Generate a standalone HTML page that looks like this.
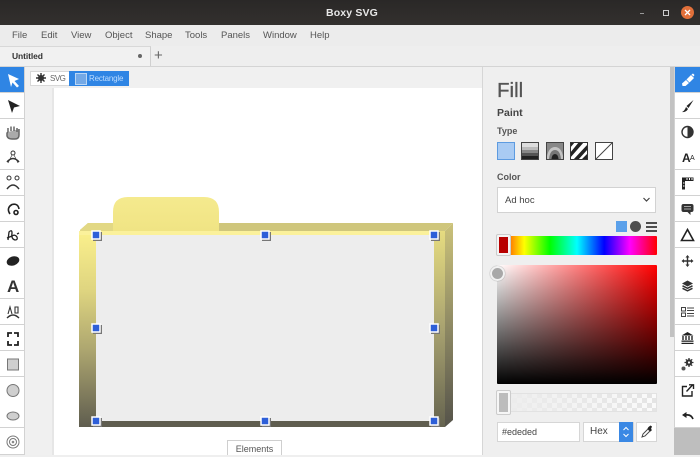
<!DOCTYPE html>
<html><head><meta charset="utf-8">
<style>
html,body{margin:0;padding:0;width:700px;height:455px;overflow:hidden;background:#efefef;font-family:"Liberation Sans",sans-serif;color:#444}
.a{position:absolute}
#title{left:0;top:0;width:700px;height:25px;background:linear-gradient(#2a2827,#33302e)}
#title span{position:absolute;left:326px;top:7px;color:#e8e8e8;font-weight:bold;font-size:10.5px;letter-spacing:.15px}
#menu{left:0;top:25px;width:700px;height:21px;background:#ececec}
#menu span{position:absolute;top:5px;font-size:9.5px;color:#555}
#tabs{left:0;top:46px;width:700px;height:21px;background:#eeeeee;border-bottom:1px solid #d4d4d4;box-sizing:border-box}
.tl{position:absolute;left:0;width:25px;height:26px;box-sizing:border-box;background:#fff;border-bottom:1px solid #d2d2d2;border-right:1px solid #d2d2d2}
.tr{position:absolute;left:674px;width:26px;height:26px;box-sizing:border-box;background:#fff;border-bottom:1px solid #d2d2d2;border-left:1px solid #d2d2d2}
.tl svg,.tr svg{position:absolute;left:0;top:0}
.tr svg{left:-1px}
.lb{position:absolute;font-size:9px;font-weight:bold;color:#555}
</style></head><body>
<div class="a" id="title"><span>Boxy SVG</span>
<div class="a" style="left:640px;top:13px;width:4px;height:1px;background:#999"></div>
<div class="a" style="left:663px;top:10px;width:4px;height:4px;border:1px solid #ccc"></div>
<div class="a" style="left:681px;top:6px;width:13px;height:13px;border-radius:50%;background:#e2703a"></div>
<svg class="a" style="left:681px;top:6px" width="13" height="13"><path d="M4 4L9 9M9 4L4 9" stroke="#fff" stroke-width="1.3"/></svg>
</div>
<div class="a" id="menu">
<span style="left:12px">File</span><span style="left:41px">Edit</span><span style="left:71px">View</span><span style="left:105px">Object</span><span style="left:145px">Shape</span><span style="left:185px">Tools</span><span style="left:221px">Panels</span><span style="left:263px">Window</span><span style="left:310px">Help</span>
</div>
<div class="a" id="tabs">
<div class="a" style="left:0;top:0;width:151px;height:20px;background:#f1f1f1;border-top:1px solid #d8d8d8;border-right:1px solid #d0d0d0;box-sizing:border-box"></div>
<div class="a" style="left:12px;top:5px;font-size:8.5px;font-weight:bold;color:#333;letter-spacing:-.1px">Untitled</div>
<div class="a" style="left:138px;top:8px;width:4px;height:4px;border-radius:50%;background:#666"></div>
<div class="a" style="left:154px;top:1px;font-size:15px;color:#666">+</div>
</div>
<!-- canvas -->
<div class="a" style="left:25px;top:67px;width:458px;height:388px;background:#f0f0f0"></div>
<div class="a" style="left:52px;top:88px;width:2px;height:367px;background:#e6e6e6"></div>
<div class="a" style="left:54px;top:88px;width:429px;height:367px;background:#fff"></div>
<div class="a" style="left:482px;top:67px;width:1px;height:388px;background:#d6d6d6"></div>
<div class="a" style="left:30px;top:71px;width:39px;height:13px;background:#fff;border:1px solid #d8d8d8;border-right:0"></div>
<svg class="a" style="left:35px;top:72px" width="12" height="12"><path d="M6 1V11M1 6H11M2.5 2.5L9.5 9.5M9.5 2.5L2.5 9.5" stroke="#333" stroke-width="1.4"/><circle cx="6" cy="6" r="3" fill="#333"/></svg>
<div class="a" style="left:50px;top:74px;font-size:8px;color:#666;letter-spacing:-.5px">SVG</div>
<div class="a" style="left:69px;top:71px;width:60px;height:15px;background:#2f85e4"></div>
<div class="a" style="left:75px;top:73px;width:10px;height:10px;background:#74a9e6;border:1px solid #b9d6f5"></div>
<div class="a" style="left:89px;top:74px;font-size:8px;color:#bcdcff;letter-spacing:-.2px">Rectangle</div>
<!-- folder -->
<svg class="a" style="left:70px;top:190px" width="400" height="250">
<defs>
<linearGradient id="g1" x1="0" y1="0" x2="0" y2="1"><stop offset="0" stop-color="#fbf08c"/><stop offset=".3" stop-color="#dfd580"/><stop offset=".6" stop-color="#aea770"/><stop offset="1" stop-color="#5f5d4f"/></linearGradient>
<linearGradient id="g2" x1="0" y1="0" x2="0" y2="1"><stop offset="0" stop-color="#e6dc80"/><stop offset=".5" stop-color="#a8a270"/><stop offset="1" stop-color="#65634f"/></linearGradient>
<linearGradient id="g4" x1="0" y1="0" x2="0" y2="1"><stop offset="0" stop-color="#cbc27a"/><stop offset=".5" stop-color="#8f8a64"/><stop offset="1" stop-color="#55534a"/></linearGradient>
<linearGradient id="g3" x1="0" y1="0" x2="0" y2="1"><stop offset="0" stop-color="#f5ea8e"/><stop offset="1" stop-color="#f0e484"/></linearGradient>
</defs>
<path d="M10 40L18 33H383L375 41H10Z" fill="#cfc67c"/>
<path d="M10 40L18 33H43V41H10Z" fill="#e2d884"/>
<path d="M43 41V22Q43 7 58 7H134Q149 7 149 22V41Z" fill="url(#g3)"/>
<path d="M9 41H375V237H9Z" fill="url(#g1)"/>
<path d="M364 41H375V237H364Z" fill="url(#g2)"/>
<path d="M375 41L383 33V230L375 237Z" fill="url(#g4)"/>
<rect x="9" y="41" width="355" height="4" fill="#fbf19b"/>
<rect x="26" y="45" width="338" height="186" fill="#ededed"/>
<rect x="26" y="231" width="338" height="6" fill="#5f5d4f"/>
</svg>
<!-- handles -->
<svg class="a" style="left:85px;top:225px" width="360" height="205">
<g fill="#777"><rect x="8" y="7" width="9" height="9"/><rect x="177" y="7" width="9" height="9"/><rect x="346" y="7" width="9" height="9"/><rect x="8" y="100" width="9" height="9"/><rect x="346" y="100" width="9" height="9"/><rect x="8" y="193" width="9" height="9"/><rect x="177" y="193" width="9" height="9"/><rect x="346" y="193" width="9" height="9"/></g>
<g fill="#2e5fd8" stroke="#fff" stroke-width="1.5">
<rect x="7" y="6" width="8" height="8"/><rect x="176" y="6" width="8" height="8"/><rect x="345" y="6" width="8" height="8"/>
<rect x="7" y="99" width="8" height="8"/><rect x="345" y="99" width="8" height="8"/>
<rect x="7" y="192" width="8" height="8"/><rect x="176" y="192" width="8" height="8"/><rect x="345" y="192" width="8" height="8"/>
</g></svg>
<div class="a" style="left:227px;top:440px;width:55px;height:15px;background:#fff;border:1px solid #cfcfcf;border-bottom:0;box-sizing:border-box;font-size:9px;text-align:center;line-height:16px;color:#555">Elements</div>
<!-- left toolbar -->
<div class="tl" style="top:67px;background:#2f85e4"><svg width="25" height="26"><path d="M8 7L19 12 14.500 14 19 19 17 20.500 12.500 15.500 11 20Z" fill="#fff"/></svg></div>
<div class="tl" style="top:93px"><svg width="25" height="26"><path d="M8 7L20 13 14 14.500 12 20Z" fill="#222"/></svg></div>
<div class="tl" style="top:119px"><svg width="25" height="26"><path d="M8 13V9M11 12V7.500M14 12V7.500M17 13V9M8 13L7 14V17Q8 20 12 20H15Q19 20 19 16V10" fill="#aaa" stroke="#666" stroke-width="1.500"/></svg></div>
<div class="tl" style="top:144px"><svg width="25" height="26" fill="none" stroke="#333"><circle cx="13" cy="9" r="2"/><path d="M7 18Q13 11 19 18" stroke-width="1.500"/><path d="M8 19L12 11M18 19L14 11" stroke-width=".6"/></svg></div>
<div class="tl" style="top:170px"><svg width="25" height="26" fill="none" stroke="#333"><circle cx="9" cy="8" r="2"/><circle cx="17" cy="8" r="2"/><path d="M7 19Q13 11 19 19" stroke-width="1.500"/></svg></div>
<div class="tl" style="top:196px"><svg width="25" height="26" fill="none" stroke="#222" stroke-width="1.600"><path d="M10 18Q6 12 12 8.500Q18 7 19 13"/><circle cx="16" cy="16.500" r="2"/></svg></div>
<div class="tl" style="top:222px"><svg width="25" height="26" fill="none" stroke="#222" stroke-width="1.300"><path d="M8 18L9 10Q12 7 12 11Q11 17 15 18Q18 18 17 15Q15 12 12 14L7 16M17 12L19 11"/></svg></div>
<div class="tl" style="top:248px"><svg width="25" height="26"><ellipse cx="13" cy="13" rx="6.500" ry="4.500" transform="rotate(-20 13 13)" fill="#222"/></svg></div>
<div class="tl" style="top:273px"><div class="a" style="left:7px;top:4px;font-size:17px;font-weight:bold;color:#333">A</div></div>
<div class="tl" style="top:299px"><svg width="25" height="26" fill="none" stroke="#333"><path d="M7 19Q13 13 19 19" stroke-width="1.400"/><path d="M8 15L10 8 12 15M15 8H18V14H15Z" stroke-width="1.100"/></svg></div>
<div class="tl" style="top:325px"><svg width="25" height="26" fill="none" stroke="#222" stroke-width="1.800"><path d="M8 12V8H12M14 8H18V12M18 16V20H14M12 20H8V16"/></svg></div>
<div class="tl" style="top:351px"><svg width="25" height="26"><rect x="7.500" y="8" width="11" height="11" fill="#cfcfcf" stroke="#777"/></svg></div>
<div class="tl" style="top:377px"><svg width="25" height="26"><circle cx="13" cy="13.500" r="6" fill="#cfcfcf" stroke="#777"/></svg></div>
<div class="tl" style="top:402px"><svg width="25" height="26"><ellipse cx="13" cy="14" rx="6" ry="4" fill="#cfcfcf" stroke="#777"/></svg></div>
<div class="tl" style="top:428px;height:27px"><svg width="25" height="26"><circle cx="13" cy="14" r="6" fill="none" stroke="#777"/><circle cx="13" cy="14" r="3.500" fill="none" stroke="#777"/><circle cx="13" cy="14" r="1.300" fill="#888"/></svg></div>
<!-- fill panel -->
<div class="a" style="left:497px;top:79px;font-size:20.5px;color:#555;-webkit-text-stroke:.3px #555">Fill</div>
<div class="a" style="left:497px;top:107px;font-size:10.5px;font-weight:bold;color:#444">Paint</div>
<div class="lb" style="left:497px;top:126px">Type</div>
<div class="a" style="left:497px;top:142px;width:16px;height:16px;background:#a9cbf3;border:1px solid #5d9be0"></div>
<svg class="a" style="left:521px;top:142px" width="18" height="18"><rect x=".5" y=".5" width="17" height="17" fill="#ddd" stroke="#444"/><rect x="1" y="5" width="16" height="3" fill="#bbb"/><rect x="1" y="8" width="16" height="3" fill="#888"/><rect x="1" y="11" width="16" height="3" fill="#555"/><rect x="1" y="14" width="16" height="3" fill="#222"/></svg>
<svg class="a" style="left:546px;top:142px" width="18" height="18"><rect x=".5" y=".5" width="17" height="17" fill="#888" stroke="#444"/><path d="M1 17V14Q3 5 9 5Q15 5 17 14V17Z" fill="#c4c4c4"/><path d="M3 17Q4 8 9 8Q14 8 15 17Z" fill="#777"/><path d="M5.500 17Q6 12 9 12Q12 12 12.500 17Z" fill="#222"/></svg>
<svg class="a" style="left:570px;top:142px" width="18" height="18"><rect width="18" height="18" fill="#fff"/><path d="M0 0H5L0 6ZM9 0H14L0 16V11ZM18 2V7L8 18H3ZM18 11V16L16 18H11Z" fill="#222"/><rect x=".5" y=".5" width="17" height="17" fill="none" stroke="#333"/></svg>
<svg class="a" style="left:595px;top:142px" width="18" height="18"><rect x=".5" y=".5" width="17" height="17" fill="#fff" stroke="#444"/><path d="M1 17L17 1" stroke="#444"/></svg>
<div class="lb" style="left:497px;top:172px">Color</div>
<div class="a" style="left:497px;top:187px;width:159px;height:26px;background:#fff;border:1px solid #d2d2d2;box-sizing:border-box"></div>
<div class="a" style="left:505px;top:195px;font-size:9.500px;color:#444">Ad hoc</div>
<svg class="a" style="left:642px;top:196px" width="9" height="8"><path d="M1.500 2L4.500 5 7.500 2" fill="none" stroke="#444" stroke-width="1.200"/></svg>
<div class="a" style="left:616px;top:221px;width:11px;height:11px;background:#5aa0ea"></div>
<div class="a" style="left:630px;top:221px;width:11px;height:11px;border-radius:50%;background:#4e4e4e"></div>
<div class="a" style="left:646px;top:222px;width:11px;height:2px;background:#4e4e4e;box-shadow:0 4px 0 #4e4e4e,0 8px 0 #4e4e4e"></div>
<div class="a" style="left:497px;top:236px;width:160px;height:19px;background:linear-gradient(90deg,#f00 0%,#ff0 17%,#0f0 33%,#0ff 50%,#00f 67%,#f0f 83%,#f00 100%);border-radius:1px"></div>
<div class="a" style="left:497px;top:235px;width:13px;height:20px;background:#b80000;border:2px solid #f4f4f4;box-sizing:border-box;box-shadow:0 0 0 1px #ccc;border-radius:1px"></div>
<div class="a" style="left:497px;top:265px;width:160px;height:119px;background:linear-gradient(180deg,rgba(0,0,0,0),#000),linear-gradient(90deg,#fff,#f00);border-radius:1px"></div>
<div class="a" style="left:490px;top:266px;width:11px;height:11px;border-radius:50%;background:#a8a8a8;border:2px solid #f2f2f2;box-shadow:0 0 1px #777"></div>
<svg class="a" style="left:497px;top:393px" width="160" height="19"><defs><pattern id="ch" width="10" height="10" patternUnits="userSpaceOnUse"><rect width="10" height="10" fill="#fafafa"/><rect width="5" height="5" fill="#e4e4e4"/><rect x="5" y="5" width="5" height="5" fill="#e4e4e4"/></pattern><linearGradient id="fd"><stop offset="0" stop-color="#ededed"/><stop offset="1" stop-color="#ededed" stop-opacity="0"/></linearGradient></defs><rect width="160" height="19" fill="url(#ch)"/><rect width="160" height="19" fill="url(#fd)"/><rect x=".5" y=".5" width="159" height="18" fill="none" stroke="#e2e2e2"/></svg>
<div class="a" style="left:497px;top:391px;width:13px;height:23px;background:#bcbcbc;border:2px solid #f6f6f6;box-sizing:border-box;box-shadow:0 0 0 1px #ccc;border-radius:1px"></div>
<div class="a" style="left:497px;top:422px;width:83px;height:20px;background:#fff;border:1px solid #d6d6d6;box-sizing:border-box;font-size:9px;line-height:18px;padding-left:4px;color:#444">#ededed</div>
<div class="a" style="left:583px;top:422px;width:51px;height:20px;background:#fff;border:1px solid #d6d6d6;box-sizing:border-box;font-size:10px;line-height:18px;padding-left:6px;color:#444">Hex</div>
<div class="a" style="left:619px;top:422px;width:14px;height:20px;background:#3a88e4"></div>
<svg class="a" style="left:619px;top:424px" width="14" height="16"><path d="M4.500 6L7 3.500 9.500 6M4.500 10L7 12.500 9.500 10" fill="none" stroke="#fff"/></svg>
<div class="a" style="left:636px;top:422px;width:21px;height:20px;background:#fff;border:1px solid #d6d6d6;box-sizing:border-box"></div>
<svg class="a" style="left:636px;top:422px" width="21" height="19"><path d="M6 15L7 12 12 7 14 9 9 14Z" fill="#fff" stroke="#444"/><path d="M11.500 6.500L14.500 9.500 16 8 15 7 16 4.500 14.500 3.500 12.500 5Z" fill="#222"/></svg>
<!-- scrollbar -->
<div class="a" style="left:670px;top:67px;width:4px;height:388px;background:#efefef"></div>
<div class="a" style="left:670px;top:67px;width:4px;height:270px;background:#c2c2c2"></div>
<!-- right toolbar -->
<div class="a" style="left:674px;top:428px;width:26px;height:27px;background:#bebebe"></div>
<div class="tr" style="top:67px;background:#2f85e4"><svg width="26" height="26"><path d="M8 16.500L12 13 15 16 11.500 19 8.500 19Z" fill="#fff"/><path d="M12.500 12.500L17 8 20 11 15.500 15.500Z" fill="#fff"/><path d="M17.500 7.500L19 6.500 20.500 8 19.500 9.500Z" fill="#fff"/></svg></div>
<div class="tr" style="top:93px"><svg width="26" height="26"><path d="M19.500 7L12.500 13 14.500 15Z" fill="#222"/><path d="M12 14L14 16Q12 19.500 8 19Q10.500 18 12 14Z" fill="#222"/></svg></div>
<div class="tr" style="top:119px"><svg width="26" height="26"><circle cx="13.500" cy="13" r="5.500" fill="#fff" stroke="#333" stroke-width="1.400"/><path d="M13.500 7.500A5.500 5.500 0 0 1 13.500 18.500Z" fill="#333"/></svg></div>
<div class="tr" style="top:144px"><div class="a" style="left:7px;top:7px;font-size:12px;font-weight:bold;color:#222">A</div><div class="a" style="left:15px;top:11px;font-size:7px;color:#222">A</div></div>
<div class="tr" style="top:170px"><svg width="26" height="26"><path d="M8 19.500V7.500H19.500V11H11V19.500Z" fill="#222"/><path d="M13 10V8M15.500 10V8M18 10V8M9 13H10.500M9 16H10.500" stroke="#fff"/></svg></div>
<div class="tr" style="top:196px"><svg width="26" height="26"><path d="M9.500 8H17.500Q19.500 8 19.500 10V14Q19.500 16 17.500 16H16.500V19L13.500 16H9.500Q7.500 16 7.500 14V10Q7.500 8 9.500 8Z" fill="#333"/><path d="M10 10.500H17M10 13H17" stroke="#ccc" stroke-width=".8"/></svg></div>
<div class="tr" style="top:222px"><svg width="26" height="26"><path d="M13.500 7.500L19.500 18.500H7.500Z" fill="none" stroke="#222" stroke-width="1.600"/></svg></div>
<div class="tr" style="top:248px"><svg width="26" height="26"><path d="M13.500 8V18M8.500 13H18.500" stroke="#333" stroke-width="1.400"/><path d="M13.500 7L11.500 9.500H15.500ZM13.500 19L11.500 16.500H15.500ZM7.500 13L10 11V15ZM19.500 13L17 11V15Z" fill="#333"/></svg></div>
<div class="tr" style="top:273px"><svg width="26" height="26"><path d="M13.500 7.500L19 10.500 13.500 13.500 8 10.500Z" fill="#333"/><path d="M8.500 12.800L13.500 15.300 18.500 12.800M8.500 15.300L13.500 17.800 18.500 15.300" fill="none" stroke="#333" stroke-width="1.500"/></svg></div>
<div class="tr" style="top:299px"><svg width="26" height="26" fill="none" stroke="#444"><rect x="7.500" y="8.500" width="4" height="3.500"/><rect x="7.500" y="14" width="4" height="3.500"/><path d="M13 9H20M13 11.500H20M13 14.500H20M13 17H20"/></svg></div>
<div class="tr" style="top:325px"><svg width="26" height="26"><path d="M13.500 7L19.500 10.500H7.500Z" fill="#222"/><path d="M9 11V15M12 11V15M15 11V15M18 11V15" stroke="#222" stroke-width="1.400"/><rect x="7.500" y="15.500" width="12" height="1.300" fill="#222"/><rect x="7.500" y="17.800" width="12" height="1.200" fill="#222"/></svg></div>
<div class="tr" style="top:351px"><svg width="26" height="26"><circle cx="15" cy="11.500" r="3.200" fill="#333"/><path d="M15 7V16M10.500 11.500H19.500M11.800 8.300L18.200 14.700M18.200 8.300L11.800 14.700" stroke="#333" stroke-width="1.300"/><circle cx="15" cy="11.500" r="1.100" fill="#fff"/><circle cx="9.500" cy="17.500" r="2" fill="#555"/></svg></div>
<div class="tr" style="top:377px"><svg width="26" height="26" fill="none" stroke="#222" stroke-width="1.400"><path d="M13 9.500H8.500V19H18V14"/><path d="M12.500 14.500L18.500 8M15 7.800H19.500V12"/></svg></div>
<div class="tr" style="top:402px"><svg width="26" height="26" fill="none" stroke="#222" stroke-width="1.700"><path d="M19 17Q17 12 11.500 13"/><path d="M8 13L12.500 10V16Z" fill="#222" stroke="none"/></svg></div>
</body></html>
